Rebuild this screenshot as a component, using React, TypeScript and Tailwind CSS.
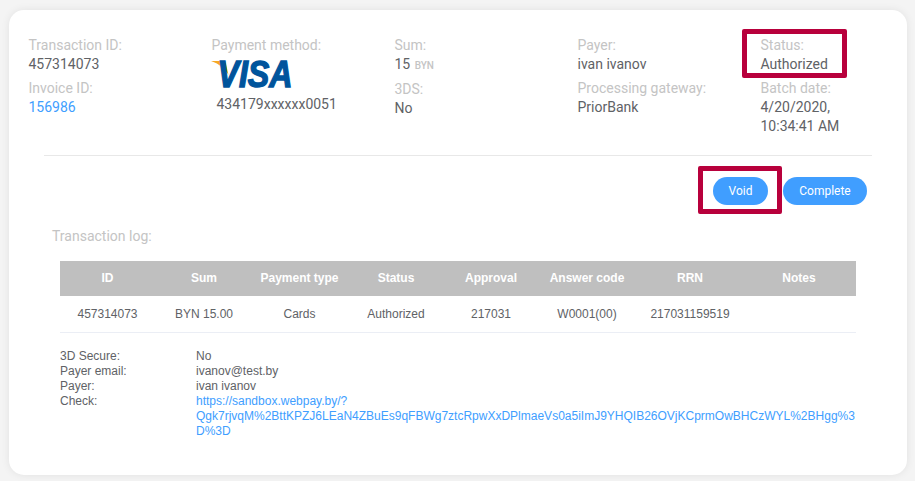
import React from 'react';

const logColumns = 'grid grid-cols-[95px_98px_93px_100px_90px_102px_104px_114px]';
const headers = ['ID', 'Sum', 'Payment type', 'Status', 'Approval', 'Answer code', 'RRN', 'Notes'];
const row = ['457314073', 'BYN 15.00', 'Cards', 'Authorized', '217031', 'W0001(00)', '217031159519', ''];

function Label({ children }: { children: React.ReactNode }) {
  return <div className="text-[#c4c4c4]">{children}</div>;
}

function VisaLogo() {
  return (
    <svg width="82" height="28" viewBox="0 0 82 28" className="block -ml-[1px] overflow-visible">
      <path d="M0 1 H11 C13.5 1 14.5 2 15 4 L17.5 15 C14.5 9 8.5 4 0 1 Z" fill="#f7a823" />
      <text
        x="81.5"
        y="26.5"
        textAnchor="end"
        fontFamily="'Liberation Sans', Arial, sans-serif"
        fontSize="36"
        fontWeight="700"
        fontStyle="italic"
        textLength="75"
        lengthAdjust="spacingAndGlyphs"
        fill="#00549c"
        stroke="#00549c"
        strokeWidth="1.4"
      >
        VISA
      </text>
    </svg>
  );
}

export default function App() {
  return (
    <div className="w-[915px] h-[481px] bg-[#f4f4f4] pt-[10px] pl-[9px] overflow-hidden font-['Roboto',sans-serif] text-[14px] leading-[19px] text-[#606266]">
      <div className="relative w-[898px] h-[465px] bg-white rounded-[15px] shadow-[0_0_8px_rgba(0,0,0,0.08)] pt-[26px]">
        {/* summary columns */}
        <div className="grid grid-cols-[183px_183px_183px_183px_1fr] pl-[19.5px] h-[119px]">
          <div>
            <Label>Transaction ID:</Label>
            <div>457314073</div>
            <div className="mt-[5px]"><Label>Invoice ID:</Label></div>
            <div className="text-[#409eff]">156986</div>
          </div>
          <div>
            <Label>Payment method:</Label>
            <div className="mt-[5px]"><VisaLogo /></div>
            <div className="mt-[7px] ml-[5px]">434179xxxxxx0051</div>
          </div>
          <div>
            <Label>Sum:</Label>
            <div>15 <span className="text-[10px] font-medium text-[#c4c4c4] ml-[1px]">BYN</span></div>
            <div className="mt-[5px]"><Label>3DS:</Label></div>
            <div>No</div>
          </div>
          <div>
            <Label>Payer:</Label>
            <div>ivan ivanov</div>
            <div className="mt-[5px]"><Label>Processing gateway:</Label></div>
            <div>PriorBank</div>
          </div>
          <div className="w-[100px]">
            <Label>Status:</Label>
            <div>Authorized</div>
            <div className="mt-[5px]"><Label>Batch date:</Label></div>
            <div>4/20/2020, 10:34:41 AM</div>
          </div>
        </div>

        <div className="ml-[35px] w-[828px] border-t border-[#e8e8e8]" />

        <div className="flex justify-end gap-[15px] mt-[21px] pr-[40px]">
          <button className="w-[55px] h-[28px] rounded-full bg-[#409eff] text-white text-[12px]">Void</button>
          <button className="w-[84px] h-[28px] rounded-full bg-[#409eff] text-white text-[12px]">Complete</button>
        </div>

        <div className="ml-[43px] mt-[22px] text-[#c4c4c4]">Transaction log:</div>

        {/* transaction log */}
        <div className="ml-[51px] w-[796px] mt-[15px] font-['Liberation_Sans',Arial,sans-serif] text-[12px]">
          <div className={`${logColumns} h-[35px] items-center bg-[#bfbfbf] text-white font-bold text-center`}>
            {headers.map((h) => (
              <div key={h}>{h}</div>
            ))}
          </div>
          <div className={`${logColumns} h-[37px] items-center text-center border-b border-[#ebeef5]`}>
            {row.map((c, i) => (
              <div key={i}>{c}</div>
            ))}
          </div>

          <div className="mt-[16px] leading-[15px] grid grid-cols-[136px_1fr]">
            <div>3D Secure:</div>
            <div>No</div>
            <div>Payer email:</div>
            <div>ivanov@test.by</div>
            <div>Payer:</div>
            <div>ivan ivanov</div>
            <div>Check:</div>
            <div className="text-[#409eff]">
              https://sandbox.webpay.by/?
              <br />
              Qgk7rjvqM%2BttKPZJ6LEaN4ZBuEs9qFBWg7ztcRpwXxDPlmaeVs0a5iImJ9YHQIB26OVjKCprmOwBHCzWYL%2BHgg%3
              <br />
              D%3D
            </div>
          </div>
        </div>

        {/* red annotation frames */}
        <div className="absolute left-[733px] top-[19px] w-[105px] h-[49px] border-[5px] border-[#b8003c] rounded-[2px]" />
        <div className="absolute left-[689px] top-[156px] w-[84px] h-[48px] border-[5px] border-[#b8003c] rounded-[2px]" />
      </div>
    </div>
  );
}
